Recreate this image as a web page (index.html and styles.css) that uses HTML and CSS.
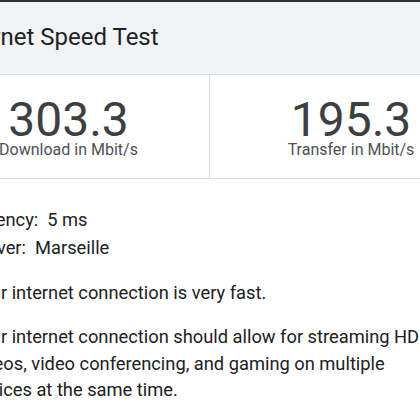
FILE: index.html
```html
<!DOCTYPE html>
<html lang="en">
<head>
<meta charset="utf-8">
<title>Internet Speed Test</title>
<link rel="stylesheet" href="styles.css">
</head>
<body>
<div class="topbar"></div>
<div class="page">
  <header class="header">
    <h1 class="title">Internet Speed Test</h1>
  </header>
  <section class="results">
    <div class="panel panel-left">
      <div class="value">303.3</div>
      <div class="label">Download in Mbit/s</div>
    </div>
    <div class="panel">
      <div class="value">195.3</div>
      <div class="label">Transfer in Mbit/s</div>
    </div>
  </section>
  <section class="details">
    <div class="row">Latency:&nbsp; 5 ms</div>
    <div class="row">Server:&nbsp; Marseille</div>
    <p class="para first">Your internet connection is very fast.</p>
    <p class="para">Your internet connection should allow for streaming HD videos, video conferencing, and gaming on multiple devices at the same time.</p>
  </section>
</div>
</body>
</html>
```
FILE: styles.css
```css
html, body {
  margin: 0;
  padding: 0;
  background: #ffffff;
  overflow: hidden;
  font-family: Roboto, "Liberation Sans", Arial, sans-serif;
  color: #202124;
}

.topbar {
  height: 2px;
  background: #2f3133;
}

.page {
  width: 564px;
  margin-left: -72px;
}

.header {
  background: #f1f3f4;
  border-bottom: 1px solid #dadce0;
  padding: 19px 24px 21px;
}

.title {
  margin: 0;
  font-size: 24px;
  font-weight: 400;
  line-height: 32px;
  color: #202124;
}

.results {
  display: grid;
  grid-template-columns: 1fr 1fr;
  border-bottom: 1px solid #dadce0;
  background: #ffffff;
}

.panel {
  display: flex;
  flex-direction: column;
  align-items: center;
  padding: 24px 0 19px;
}

.panel-left {
  border-right: 1px solid #dadce0;
}

.value {
  font-size: 48px;
  line-height: 42px;
  color: #3c4043;
}

.label {
  font-size: 16px;
  line-height: 18px;
  color: #4d5156;
}

.details {
  padding: 27px 42px 0 42px;
  font-size: 18.3px;
}

.row {
  line-height: 28px;
}

.para {
  margin: 18px 0 0;
  line-height: 26.5px;
  max-width: 468px;
}

.para.first {
  margin-top: 17.5px;
}
```
